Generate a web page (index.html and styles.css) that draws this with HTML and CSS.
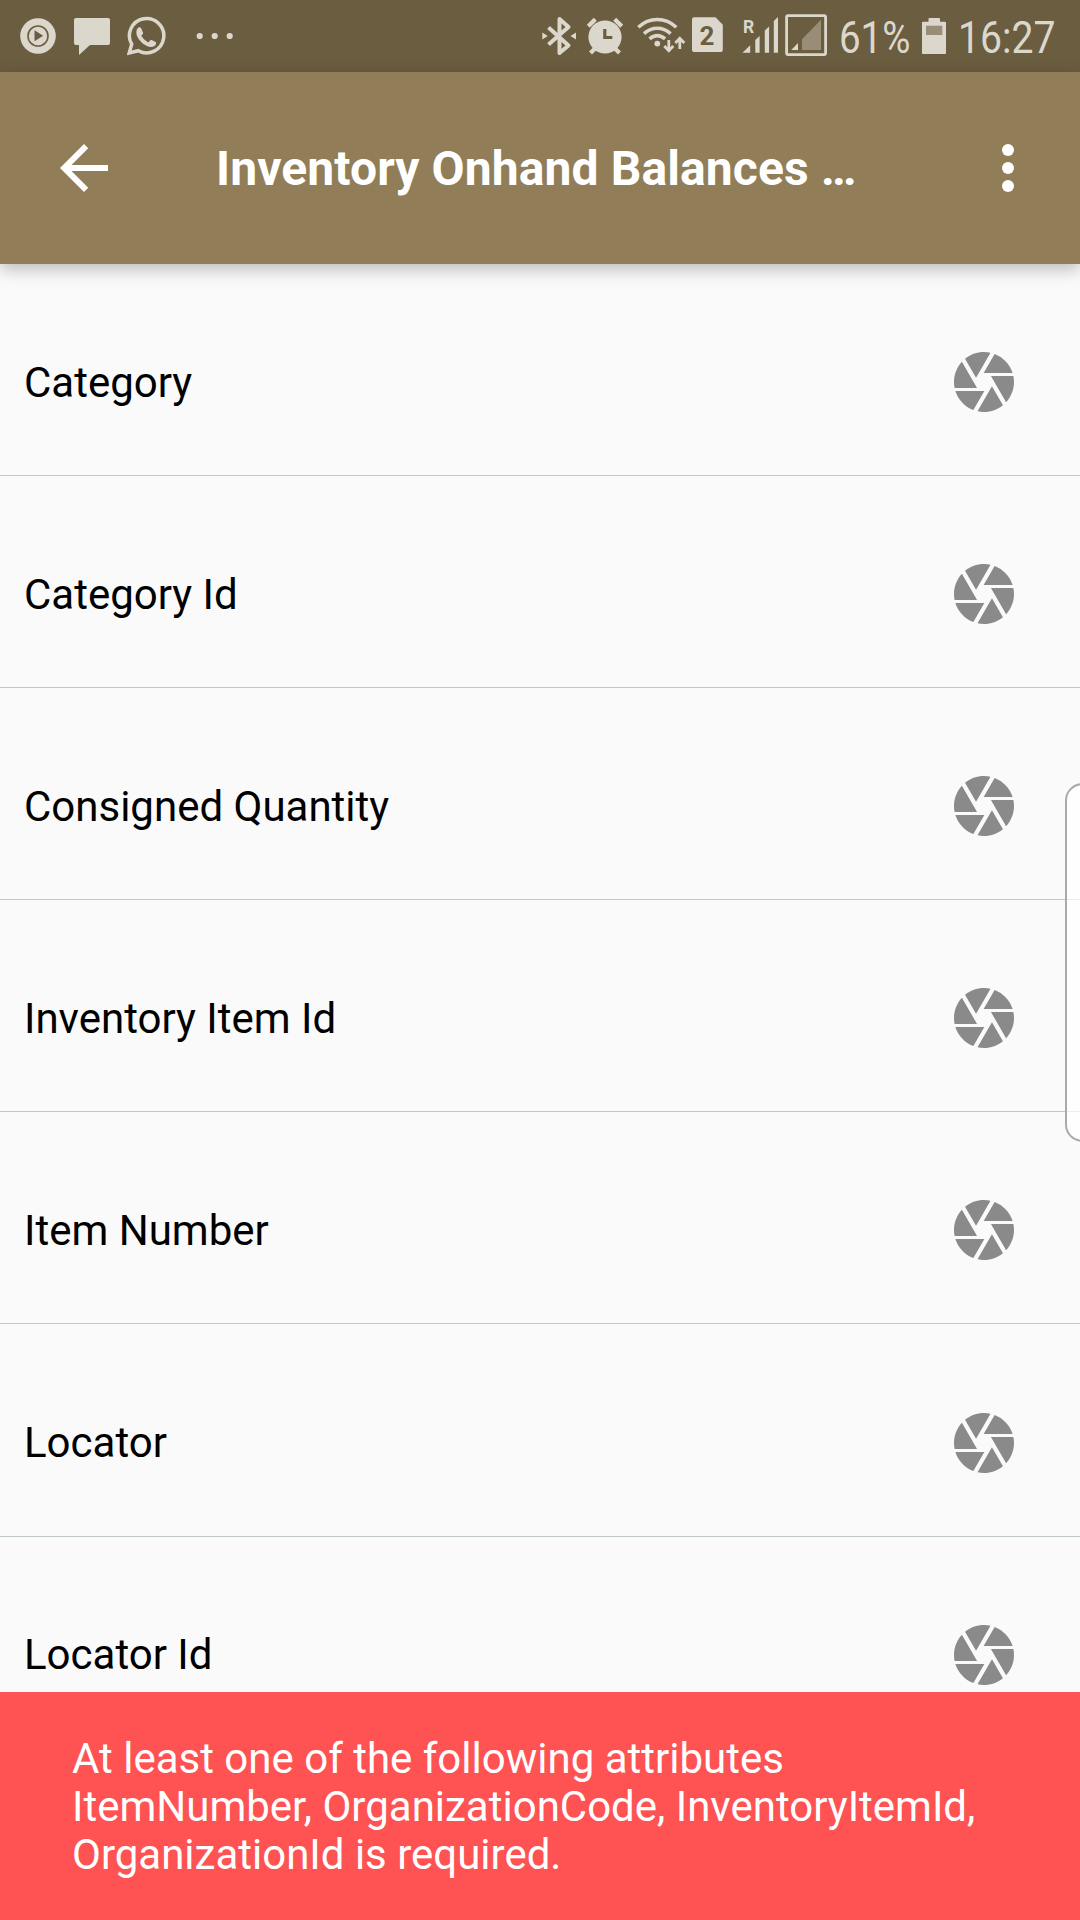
FILE: index.html
```html
<!DOCTYPE html>
<html lang="en">
<head>
<meta charset="utf-8">
<title>Inventory Onhand Balances</title>
<link rel="stylesheet" href="styles.css">
</head>
<body>
<svg class="sprite" aria-hidden="true">
  <symbol id="shutter" viewBox="0 0 24 24">
    <path d="M9.4 10.5l4.77-8.26C13.47 2.09 12.75 2 12 2c-2.4 0-4.6.85-6.32 2.25l3.66 6.35.06-.1zM21.54 9c-.92-2.92-3.15-5.26-6-6.34L11.88 9h9.66zm.26 1h-7.49l.29.5 4.76 8.25C21 16.97 22 14.61 22 12c0-.69-.07-1.35-.2-2zM8.54 12l-3.9-6.75C3.01 7.03 2 9.39 2 12c0 .69.07 1.35.2 2h7.49l-1.15-2zm-6.08 3c.92 2.92 3.15 5.26 6 6.34L12.12 15H2.46zm11.27 0l-3.9 6.76c.7.15 1.42.24 2.17.24 2.4 0 4.6-.85 6.32-2.25l-3.66-6.35-.93 1.6z"/>
  </symbol>
</svg>
<div class="screen">
  <div class="status">
    <div class="status-left">
      <svg width="36" height="72" viewBox="20 0 36 72"><circle cx="38" cy="36" r="17.8"/><circle class="ring" cx="38" cy="36" r="10"/><path class="cut" d="M34.5 30.3v11l8.7-5.5z"/></svg>
      <svg width="36" height="72" viewBox="74 0 36 72"><path d="M76 18h32a2 2 0 0 1 2 2v23a2 2 0 0 1-2 2H90L79 55V45h-3a2 2 0 0 1-2-2V20a2 2 0 0 1 2-2z"/></svg>
      <svg width="39" height="72" viewBox="127 0 39 72"><path class="wa" d="M129.2 53l2.5-8.8a17.2 17.2 0 1 1 6.6 6.5z"/><path d="M137.6 28.2c1-1.2 2.7-1.4 3.4-.2l2 4.4c.4 1-.3 1.8-1.7 3.4 1.700 3 3.900 5 7.100 6.600 1.400-1.700 2.100-2.900 3.200-2.400l4.100 2c1.200.6.2 3-1.200 4-3.400 2.200-7.700.6-11.300-2.200-3.400-2.700-6.400-6.600-6.800-10.200-.2-2.200.2-4.200 1.200-5.400z"/></svg>
      <svg width="38" height="72" viewBox="196 0 38 72"><circle cx="199.700" cy="36" r="3.100"/><circle cx="214.700" cy="36" r="3.100"/><circle cx="229.700" cy="36" r="3.100"/></svg>
    </div>
    <div class="status-right">
      <svg width="34" height="72" viewBox="542 0 34 72"><path class="line" stroke-width="4" stroke-linejoin="round" d="M548.500 27.500L568.500 45.500 559.500 53V19l9 8-20 17.500"/><path d="M542.300 32.500v7l5.500-3.500zM576 32.500v7l-5.500-3.500z"/></svg>
      <svg width="36" height="72" viewBox="587 0 36 72"><circle cx="605" cy="37" r="16.600"/><path class="line" stroke-width="4.200" d="M588.300 26.200l7-7M614.700 19.200l7 7M590.500 53l5-5M619.500 53l-5-5"/><path class="hands" d="M604.800 29v8.500h7.500"/></svg>
      <svg width="49" height="72" viewBox="637 0 49 72"><circle cx="657.300" cy="43.600" r="2.900"/><path class="line" stroke-width="3.500" d="M638.300 27.300c11-10.300 27-10.300 38 0M644 33.600c8-7.200 18.600-7.200 26.600 0M649.500 38.900c5-4.200 10.600-4.200 15.600 0"/><path class="line" stroke-width="2.800" d="M668.800 40v10M664.300 46l4.500 4.700 4.500-4.700M679.800 49V39M675.300 43l4.500-4.700 4.500 4.700"/></svg>
      <svg width="31" height="72" viewBox="692 0 31 72"><path d="M694 17.300h21.500l7.300 7.500V50a2 2 0 0 1-2 2H694a2 2 0 0 1-2-2V19.300a2 2 0 0 1 2-2z"/><text class="sim" x="707" y="44.700">2</text></svg>
      <svg width="36" height="72" viewBox="742 0 36 72"><text class="roam" x="743" y="32.600">R</text><path d="M742.500 52.700l7.700-7.500v7.500zM755.300 52.700V40l4.300-4v16.700zM764.800 52.700V30.500l4.300-4v26.200zM773.800 52.700V21l4.300-4v35.700z"/></svg>
      <svg width="42" height="72" viewBox="785 0 42 72"><rect class="line" stroke-width="2.800" x="786.600" y="15.600" width="39" height="39" rx="1.500"/><path d="M791.300 50l6.700-7v7z"/><path class="dim" d="M802 50V39.300l19-19.600V50z"/></svg>
      <span class="battery-level"><span>61%</span></span>
      <svg width="24" height="72" viewBox="922 0 24 72"><path d="M923 21.700h5.500V19a1 1 0 0 1 1-1h9.500a1 1 0 0 1 1 1v2.700h5a1 1 0 0 1 1 1V53a1 1 0 0 1-1 1h-22a1 1 0 0 1-1-1V22.700a1 1 0 0 1 1-1z"/><path class="dim" d="M926 25.700h16.300V35H926z"/></svg>
      <span class="clock"><span>16:27</span></span>
    </div>
  </div>

  <header class="appbar">
    <svg class="action" viewBox="0 0 24 24"><path d="M20 11H7.830l5.590-5.590L12 4l-8 8 8 8 1.410-1.410L7.830 13H20v-2z"/></svg>
    <h1 class="title">Inventory Onhand Balances …</h1>
    <svg class="action" viewBox="0 0 24 24"><circle cx="12" cy="6" r="2"/><circle cx="12" cy="12" r="2"/><circle cx="12" cy="18" r="2"/></svg>
  </header>

  <main class="list">
    <div class="row"><span>Category</span><svg class="scan"><use href="#shutter"/></svg></div>
    <div class="row"><span>Category Id</span><svg class="scan"><use href="#shutter"/></svg></div>
    <div class="row"><span>Consigned Quantity</span><svg class="scan"><use href="#shutter"/></svg></div>
    <div class="row"><span>Inventory Item Id</span><svg class="scan"><use href="#shutter"/></svg></div>
    <div class="row"><span>Item Number</span><svg class="scan"><use href="#shutter"/></svg></div>
    <div class="row"><span>Locator</span><svg class="scan"><use href="#shutter"/></svg></div>
    <div class="row"><span>Locator Id</span><svg class="scan"><use href="#shutter"/></svg></div>
  </main>

  <div class="toast">At least one of the following attributes ItemNumber, OrganizationCode, InventoryItemId, OrganizationId is required.</div>
  <div class="edge-handle"></div>
</div>
</body>
</html>
```
FILE: styles.css
```css
* { box-sizing: border-box; }

body {
  margin: 0;
  font-family: Roboto, sans-serif;
  background: #fafafa;
}

.sprite { display: none; }

.screen {
  position: relative;
  display: flex;
  flex-direction: column;
  width: 1080px;
  height: 1920px;
  overflow: hidden;
}

/* Status bar */
.status {
  display: flex;
  flex: none;
  justify-content: space-between;
  height: 72px;
  padding: 0 24px 0 20px;
  background: #6b5d40;
  color: #dcd7cd;
}

.status svg { display: block; flex: none; fill: #dcd7cd; }
.status-left, .status-right { display: flex; }
.status-left svg + svg { margin-left: 18px; }
.status-left svg:nth-child(3) { margin-left: 17px; }
.status-left svg:nth-child(4) { margin-left: 30px; }
.status-right svg:nth-child(2) { margin-left: 11px; }
.status-right svg:nth-child(3) { margin-left: 14px; }
.status-right svg:nth-child(4) { margin-left: 6px; }
.status-right svg:nth-child(5) { margin-left: 19px; }
.status-right svg:nth-child(6) { margin-left: 7px; }

.status .line { fill: none; stroke: #dcd7cd; }
.status .ring { fill: none; stroke: #6b5d40; stroke-width: 1.6; }
.status .cut { fill: #6b5d40; }
.status .wa { fill: none; stroke: #dcd7cd; stroke-width: 3.5; }
.status .hands { fill: none; stroke: #6b5d40; stroke-width: 3.2; }
.status .dim { fill: #998d77; }
.status .sim { font-size: 26px; font-weight: 700; fill: #6b5d40; text-anchor: middle; }
.roam { font-size: 17.500px; font-weight: 700; }

.battery-level, .clock {
  flex: none;
  font-size: 45px;
  line-height: 75px;
  white-space: nowrap;
}
.battery-level { width: 74px; margin: 0 9px 0 12px; }
.clock { width: 98px; margin-left: 12px; }
.battery-level span, .clock span {
  display: inline-block;
  transform-origin: 0 50%;
  transform: scaleX(0.855);
}
.clock span { transform: scaleX(0.870); }

/* App bar */
.appbar {
  position: relative;
  z-index: 1;
  display: flex;
  flex: none;
  align-items: center;
  height: 192px;
  padding: 0 36px 0 48px;
  background: #917d58;
  box-shadow: 0 5px 16px rgba(0, 0, 0, 0.260);
}
.action { flex: none; width: 72px; height: 72px; fill: #fff; }
.title {
  flex: 1;
  margin: 0 0 0 93px;
  padding: 2px 0 0 3px;
  color: #fff;
  font-size: 48px;
  font-weight: 700;
  letter-spacing: 0.1px;
  line-height: 56px;
  white-space: nowrap;
}

/* Attribute list */
.list { flex: 1; min-height: 0; overflow: hidden; }
.row {
  display: flex;
  align-items: center;
  justify-content: space-between;
  height: 212.100px;
  padding: 25px 60px 0 24px;
  border-bottom: 1px solid #c0c7ca;
  color: #000;
  font-size: 42px;
  line-height: 50px;
}
.row span { padding-top: 1.400px; }
.scan { flex: none; width: 72px; height: 72px; fill: #8a8a8a; }

/* Error message */
.toast {
  flex: none;
  height: 228px;
  padding: 43px 72px 41px;
  background: #ff5252;
  color: #fff;
  font-size: 42px;
  line-height: 48px;
}

/* Edge panel handle, floating over the list */
.edge-handle {
  position: absolute;
  top: 783px;
  right: -20px;
  width: 35px;
  height: 359px;
  border: 2px solid #aaa;
  border-radius: 20px;
  background: rgba(255, 255, 255, 0.700);
}
```
